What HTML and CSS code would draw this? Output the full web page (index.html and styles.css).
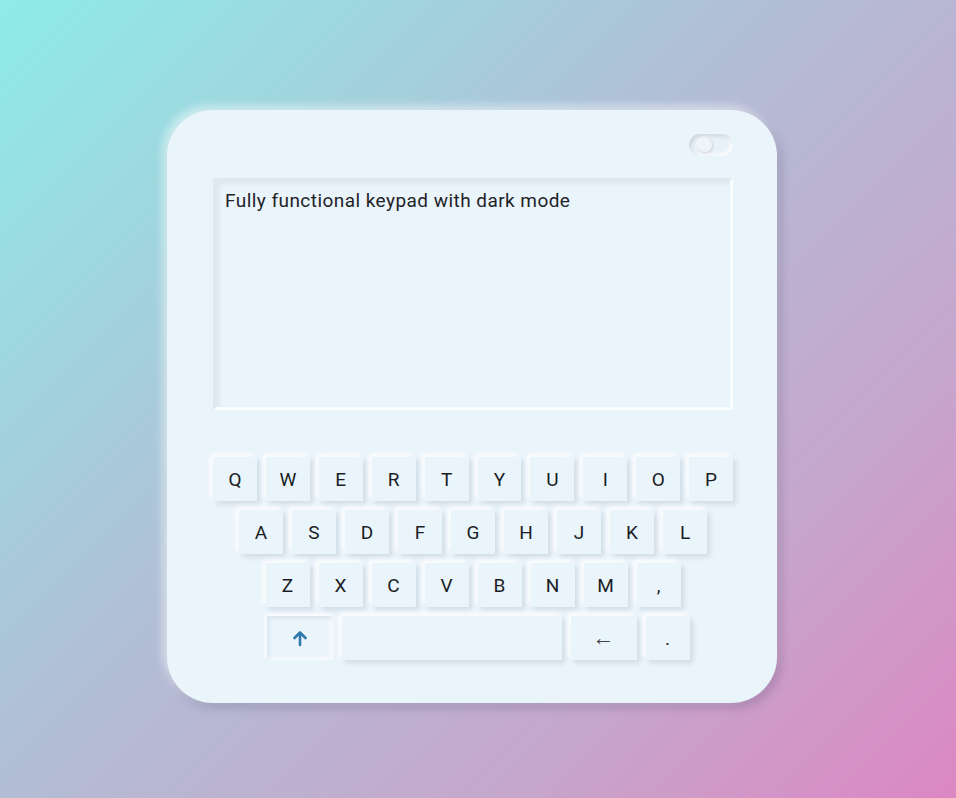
FILE: index.html
```html
<!DOCTYPE html>
<html>
<head>
<meta charset="utf-8">
<link rel="stylesheet" href="styles.css">
</head>
<body>
<div class="card">
  <div class="top">
    <div class="toggle"><span class="knob"></span></div>
  </div>
  <div class="screen">Fully functional keypad with dark mode</div>
  <div class="keys">
    <div class="row">
      <div class="key">Q</div><div class="key">W</div><div class="key">E</div><div class="key">R</div><div class="key">T</div><div class="key">Y</div><div class="key">U</div><div class="key">I</div><div class="key">O</div><div class="key">P</div>
    </div>
    <div class="row">
      <div class="key">A</div><div class="key">S</div><div class="key">D</div><div class="key">F</div><div class="key">G</div><div class="key">H</div><div class="key">J</div><div class="key">K</div><div class="key">L</div>
    </div>
    <div class="row">
      <div class="key">Z</div><div class="key">X</div><div class="key">C</div><div class="key">V</div><div class="key">B</div><div class="key">N</div><div class="key">M</div><div class="key">,</div>
    </div>
    <div class="row row-last">
      <div class="key key-shift pressed"><svg width="18" height="18" viewBox="0 0 18 18"><path d="M9 16V3.5M3.5 9L9 3.5L14.5 9" fill="none" stroke="#2f78aa" stroke-width="2.6" stroke-linecap="round" stroke-linejoin="round"/></svg></div>
      <div class="key key-space"></div>
      <div class="key key-back">←</div>
      <div class="key">.</div>
    </div>
  </div>
</div>
</body>
</html>
```
FILE: styles.css
```css
html, body {
  margin: 0;
  height: 100%;
}
body {
  background: linear-gradient(135deg, #8eece7 0%, #b2bdd6 45%, #c6a6cc 75%, #dc87c2 100%);
  font-family: Roboto, "Liberation Sans", sans-serif;
  padding: 110px 0 0 167px;
  box-sizing: border-box;
}
.card {
  width: 610px;
  height: 593px;
  box-sizing: border-box;
  background: #eaf4fb;
  border-radius: 46px;
  padding: 24px 44px 0 46px;
  box-shadow: -4px -4px 10px rgba(255, 255, 255, 0.55), 4px 5px 10px rgba(60, 60, 90, 0.22);
}
.top {
  display: flex;
  justify-content: flex-end;
  height: 22px;
}
.toggle {
  width: 44px;
  height: 22px;
  border-radius: 11px;
  box-sizing: border-box;
  background: #e8f1f8;
  box-shadow: inset 2px 2px 4px rgba(0, 0, 0, 0.12), inset -2px -2px 4px rgba(255, 255, 255, 0.9);
  display: flex;
  align-items: center;
  padding-left: 9px;
}
.knob {
  width: 14px;
  height: 14px;
  border-radius: 50%;
  background: #edf5fb;
  box-shadow: 1px 1px 3px rgba(0, 0, 0, 0.14), -1px -1px 2px rgba(255, 255, 255, 0.9);
}
.screen {
  margin-top: 22px;
  width: 520px;
  height: 232px;
  box-sizing: border-box;
  padding: 8px 9px;
  font-size: 19px;
  letter-spacing: 0.45px;
  color: #1f2328;
  background: #eaf4fb;
  border-top: 3px solid #dfe8ef;
  border-left: 3px solid #dfe8ef;
  border-right: 3px solid #fafdff;
  border-bottom: 3px solid #fafdff;
  box-shadow: inset 3px 3px 5px rgba(0, 0, 0, 0.06);
}
.keys {
  margin-top: 47px;
  display: flex;
  flex-direction: column;
  gap: 9px;
}
.row {
  display: flex;
  justify-content: center;
  gap: 9px;
}
.row-last {
  padding-left: 10px;
}
.key {
  width: 44px;
  height: 44px;
  background: #eaf4fb;
  display: flex;
  align-items: center;
  justify-content: center;
  font-size: 19px;
  color: #1b1e24;
  box-shadow: 3px 3px 5px rgba(60, 70, 90, 0.14), -3px -3px 5px rgba(255, 255, 255, 0.9);
}
.key-shift {
  width: 66px;
}
.pressed {
  box-shadow: inset 2px 2px 4px rgba(60, 70, 90, 0.1), inset -2px -2px 4px rgba(255, 255, 255, 0.9), -2px -2px 4px rgba(255, 255, 255, 0.9);
}
.key-space {
  width: 220px;
}
.key-back {
  width: 66px;
  font-size: 22px;
  color: #444;
}
```
